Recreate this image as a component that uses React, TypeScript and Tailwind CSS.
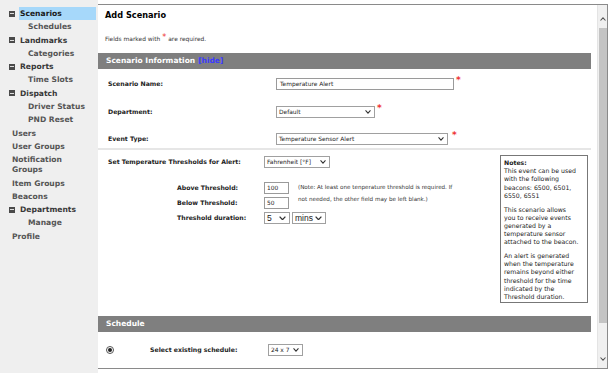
import React from "react";

const Chevron = ({ size = 6 }: { size?: number }) => (
  <svg width={size} height={size * 0.66} viewBox="0 0 6 4" className="shrink-0">
    <polyline points="0.5,0.5 3,3.2 5.5,0.5" fill="none" stroke="#333" strokeWidth="1.1" />
  </svg>
);

const Star = () => (
  <span className="self-start -mt-[3px] ml-[2px] text-[9px] leading-[10px] text-[#ee3333] font-bold">*</span>
);

const Select = ({
  text,
  className,
  big,
}: {
  text: string;
  className: string;
  big?: boolean;
}) => (
  <div
    className={`flex items-center justify-between h-[12px] border border-[#a0a0a0] bg-white pl-[2px] pr-[3px] ${className}`}
  >
    <span
      className={
        big
          ? "text-[8.5px] leading-[10px] text-[#222] font-['Liberation_Sans',sans-serif]"
          : "text-[5.9px] leading-[10px] text-[#222] whitespace-nowrap"
      }
    >
      {text}
    </span>
    <Chevron size={big ? 7 : 6} />
  </div>
);

const Input = ({ value, className }: { value: string; className: string }) => (
  <div
    className={`flex items-center h-[12px] border border-[#9a9a9a] bg-white pl-[2px] text-[5.9px] text-[#222] ${className}`}
  >
    {value}
  </div>
);

const MinusBox = () => (
  <span className="absolute left-[9px] top-1/2 -translate-y-1/2 w-[6px] h-[6px] bg-[#4a4a4a] flex items-center justify-center">
    <span className="w-[4px] h-[1px] bg-[#ddd]" />
  </span>
);

type NavItem = { label: string; kind: "top" | "sub" | "plain"; active?: boolean; tall?: boolean };

const nav: NavItem[] = [
  { label: "Scenarios", kind: "top", active: true },
  { label: "Schedules", kind: "sub" },
  { label: "Landmarks", kind: "top" },
  { label: "Categories", kind: "sub" },
  { label: "Reports", kind: "top" },
  { label: "Time Slots", kind: "sub" },
  { label: "Dispatch", kind: "top" },
  { label: "Driver Status", kind: "sub" },
  { label: "PND Reset", kind: "sub" },
  { label: "Users", kind: "plain" },
  { label: "User Groups", kind: "plain" },
  { label: "Notification Groups", kind: "plain", tall: true },
  { label: "Item Groups", kind: "plain" },
  { label: "Beacons", kind: "plain" },
  { label: "Departments", kind: "top" },
  { label: "Manage", kind: "sub" },
  { label: "Profile", kind: "plain" },
];

const Sidebar = () => (
  <div className="w-[98px] shrink-0 h-full bg-[#efefef] pt-[7px] font-bold text-[7.6px]">
    {nav.map((n) => (
      <div
        key={n.label}
        className={`relative flex items-center ${n.tall ? "h-[23.3px] leading-[10px]" : "h-[13.3px]"}`}
      >
        {n.kind === "top" && <MinusBox />}
        <span
          className={
            n.kind === "top"
              ? `ml-[19px] pl-[1px] ${n.active ? "bg-[#a6d8fa] w-[77px] h-[13px] flex items-center text-[#1a1a1a]" : "text-[#383838]"}`
              : n.kind === "sub"
              ? "ml-[28px] text-[#555]"
              : "ml-[12px] text-[#555]"
          }
        >
          {n.tall ? (
            <>
              Notification
              <br />
              Groups
            </>
          ) : (
            n.label
          )}
        </span>
      </div>
    ))}
  </div>
);

const Header = ({ children }: { children: React.ReactNode }) => (
  <div className="h-[16px] mr-[6px] bg-[#7f7f7f] flex items-center pl-[8px] text-white font-bold text-[7.5px]">
    {children}
  </div>
);

const Row = ({ label, children, className }: { label: string; children: React.ReactNode; className: string }) => (
  <div className={`flex items-center h-[12px] pl-[10px] ${className}`}>
    <span className="w-[168px] shrink-0 font-bold text-[6.2px] text-[#222]">{label}</span>
    {children}
  </div>
);

const Scrollbar = () => (
  <div className="w-[10px] shrink-0 bg-[#f0f0f0] flex flex-col items-center border-l border-[#e4e4e4]">
    <div className="h-[23px] w-full flex items-center justify-center pt-[4px]">
      <svg width="6" height="4" viewBox="0 0 6 4">
        <polyline points="0.5,3.5 3,0.8 5.5,3.5" fill="none" stroke="#555" strokeWidth="1.1" />
      </svg>
    </div>
    <div className="w-[8px] h-[295px] bg-[#c4c4c4]" />
    <div className="flex-1" />
    <div className="h-[18px] w-full flex items-center justify-center">
      <svg width="6" height="4" viewBox="0 0 6 4">
        <polyline points="0.5,0.5 3,3.2 5.5,0.5" fill="none" stroke="#555" strokeWidth="1.1" />
      </svg>
    </div>
  </div>
);

const Label = ({ children }: { children: React.ReactNode }) => (
  <span className="w-[87px] shrink-0 font-bold text-[6.2px] text-[#222]">{children}</span>
);

export default function App() {
  return (
    <div className="w-[615px] h-[373px] bg-white flex font-['DejaVu_Sans',Verdana,sans-serif] overflow-hidden">
      <Sidebar />
      <div className="mt-[4px] mr-[7px] h-[365px] flex-1 flex border-t border-b border-r border-[#8a8a8a]">
        <div className="flex-1 flex flex-col overflow-hidden">
          <div className="pt-[5px] pl-[7px] h-[15px] font-bold text-[8.2px] leading-[10px] text-black">Add Scenario</div>
          <div className="mt-[15px] pl-[7px] h-[8px] leading-[8px] text-[5.9px] text-[#333] flex items-start">
            Fields marked with
            <span className="text-[#ee3333] text-[8px] leading-[8px] mx-[2px] -mt-[1px]">*</span>
            are required.
          </div>
          <div className="mt-[10px]">
            <Header>
              Scenario Information <span className="ml-[3px] text-[#3a3aff]">[hide]</span>
            </Header>
          </div>

          <Row label="Scenario Name:" className="mt-[9px]">
            <Input value="Temperature Alert" className="w-[178px] pl-[3px]" />
            <Star />
          </Row>
          <Row label="Department:" className="mt-[16px]">
            <Select text="Default" className="w-[99px]" />
            <Star />
          </Row>
          <Row label="Event Type:" className="mt-[15px]">
            <Select text="Temperature Sensor Alert" className="w-[172px]" />
            <span className="ml-[2px]" />
            <Star />
          </Row>
          <div className="mt-[3px] h-[2px] mr-[6px] bg-[#e6e6e6]" />

          <div className="flex">
            <div className="w-[402px] shrink-0">
              <div className="mt-[6px] flex items-center h-[12px] pl-[10px]">
                <span className="w-[156px] shrink-0 font-bold text-[6.2px] text-[#222]">
                  Set Temperature Thresholds for Alert:
                </span>
                <Select text="Fahrenheit [°F]" className="w-[66px]" />
              </div>
              <div className="mt-[14px] pl-[79px] flex flex-col gap-[3px]">
                <div className="flex">
                  <div className="flex flex-col gap-[3px]">
                    <div className="flex items-center h-[12px]">
                      <Label>Above Threshold:</Label>
                      <Input value="100" className="w-[25px]" />
                    </div>
                    <div className="flex items-center h-[12px]">
                      <Label>Below Threshold:</Label>
                      <Input value="50" className="w-[25px]" />
                    </div>
                  </div>
                  <div className="ml-[9px] -mt-[1px] text-[5.6px] leading-[12px] text-[#333] whitespace-nowrap">
                    (Note: At least one tenperature threshold is required. If
                    <br />
                    not needed, the other field may be left blank.)
                  </div>
                </div>
                <div className="flex items-center h-[12px]">
                  <Label>Threshold duration:</Label>
                  <Select text="5" big className="w-[26px]" />
                  <Select text="mins" big className="w-[34px] ml-[2px]" />
                </div>
              </div>
            </div>
            <div className="mt-[5px] w-[88px] h-[148px] shrink-0 border border-[#777] px-[3px] pt-[3px] text-[6.2px] leading-[8.2px] text-[#222] whitespace-nowrap">
              <div className="font-bold">Notes:</div>
              <div>
                This event can be used
                <br />
                with the following
                <br />
                beacons: 6500, 6501,
                <br />
                6550, 6551
              </div>
              <div className="mt-[5.5px]">
                This scenario allows
                <br />
                you to receive events
                <br />
                generated by a
                <br />
                temperature sensor
                <br />
                attached to the beacon.
              </div>
              <div className="mt-[5.5px]">
                An alert is generated
                <br />
                when the temperature
                <br />
                remains beyond either
                <br />
                threshold for the time
                <br />
                indicated by the
                <br />
                Threshold duration.
              </div>
            </div>
          </div>

          <div className="mt-[13px]">
            <Header>Schedule</Header>
          </div>
          <div className="mt-[12px] flex items-center h-[12px]">
            <span className="ml-[8px] w-[8px] h-[8px] rounded-full border border-[#555] bg-white flex items-center justify-center">
              <span className="w-[4px] h-[4px] rounded-full bg-[#222]" />
            </span>
            <span className="ml-[36px] w-[118px] shrink-0 font-bold text-[6.2px] text-[#222]">
              Select existing schedule:
            </span>
            <Select text="24 x 7" className="w-[35px]" />
          </div>
        </div>
        <Scrollbar />
      </div>
    </div>
  );
}
